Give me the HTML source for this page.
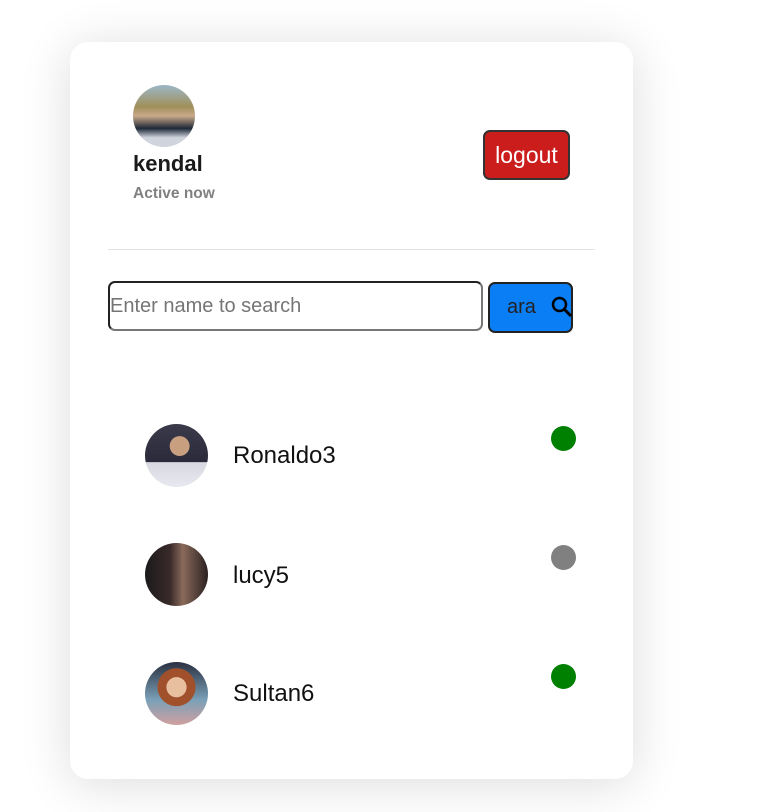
<!DOCTYPE html>
<html><head><style>
body{margin:0;width:771px;height:812px;background:#fff;font-family:"Liberation Sans",sans-serif;position:relative;overflow:hidden}
.card{position:absolute;left:70px;top:42px;width:563px;height:737px;background:#fff;border-radius:18px;box-shadow:0 5px 50px rgba(0,0,0,0.14)}
.abs{position:absolute}
.av{border-radius:50%;overflow:hidden}
.dot{position:absolute;width:25px;height:25px;border-radius:50%;left:551px}
.name{position:absolute;left:233px;font-size:24px;color:#111}
</style></head><body>
<div class="card"></div>
<div class="abs av" style="left:133px;top:85px;width:62px;height:62px;background:linear-gradient(180deg,#9bb7c8 0%,#a0905a 35%,#c9a98a 50%,#1e2838 70%,#d0d4dc 85%,#d0d4dc 100%)"></div>
<div class="abs" style="left:133px;top:151px;font-size:22px;font-weight:bold;color:#1a1a1a">kendal</div>
<div class="abs" style="left:133px;top:185px;font-size:15.5px;font-weight:bold;color:#808080">Active now</div>
<div class="abs" style="left:483px;top:130px;width:83px;height:46px;background:#cc1d1d;border:2px solid #333;border-radius:7px;color:#fff;font-size:23px;line-height:46px;text-align:center">logout</div>
<div class="abs" style="left:108px;top:249px;width:487px;height:1px;background:#e3e3e3"></div>
<div class="abs" style="left:108px;top:281px;width:371px;height:46px;border:2px solid #222;border-bottom-color:#777;border-right-color:#777;border-radius:7px;font-size:20px;color:#757575;line-height:46px;padding-left:0">Enter name to search</div>
<div class="abs" style="left:488px;top:282px;width:81px;height:47px;background:#0a7ff5;border:2px solid #222;border-radius:7px;font-size:20px;color:#222;line-height:47px"><span style="margin-left:17px">ara</span>
<svg class="abs" style="left:61px;top:12px" width="22" height="22" viewBox="0 0 22 22"><circle cx="8.5" cy="8.5" r="6.5" fill="none" stroke="#000" stroke-width="2.5"/><path d="M13 13 L20 20" stroke="#000" stroke-width="3"/></svg></div>
<div class="abs av" style="left:145px;top:424px;width:63px;height:63px;background:radial-gradient(circle at 55% 35%,#c8a080 0 18%,transparent 19%),linear-gradient(180deg,#3a3a4a 0%,#2a2a3a 60%,#d8d8e0 61%,#e8e8f0 100%)"></div>
<div class="name" style="top:442px">Ronaldo3</div>
<div class="dot" style="top:426px;background:#008000"></div>
<div class="abs av" style="left:145px;top:543px;width:63px;height:63px;background:linear-gradient(90deg,#1a1a1a 0%,#3a2a2a 40%,#8a6a5a 60%,#2a2020 100%)"></div>
<div class="name" style="top:562px">lucy5</div>
<div class="dot" style="top:545px;background:#808080"></div>
<div class="abs av" style="left:145px;top:662px;width:63px;height:63px;background:radial-gradient(circle at 50% 40%,#e8c0a0 0 20%,#a0502a 21% 38%,transparent 39%),linear-gradient(180deg,#2a3040 0%,#7aa0b8 60%,#d0a0a0 100%)"></div>
<div class="name" style="top:680px">Sultan6</div>
<div class="dot" style="top:664px;background:#008000"></div>
</body></html>
